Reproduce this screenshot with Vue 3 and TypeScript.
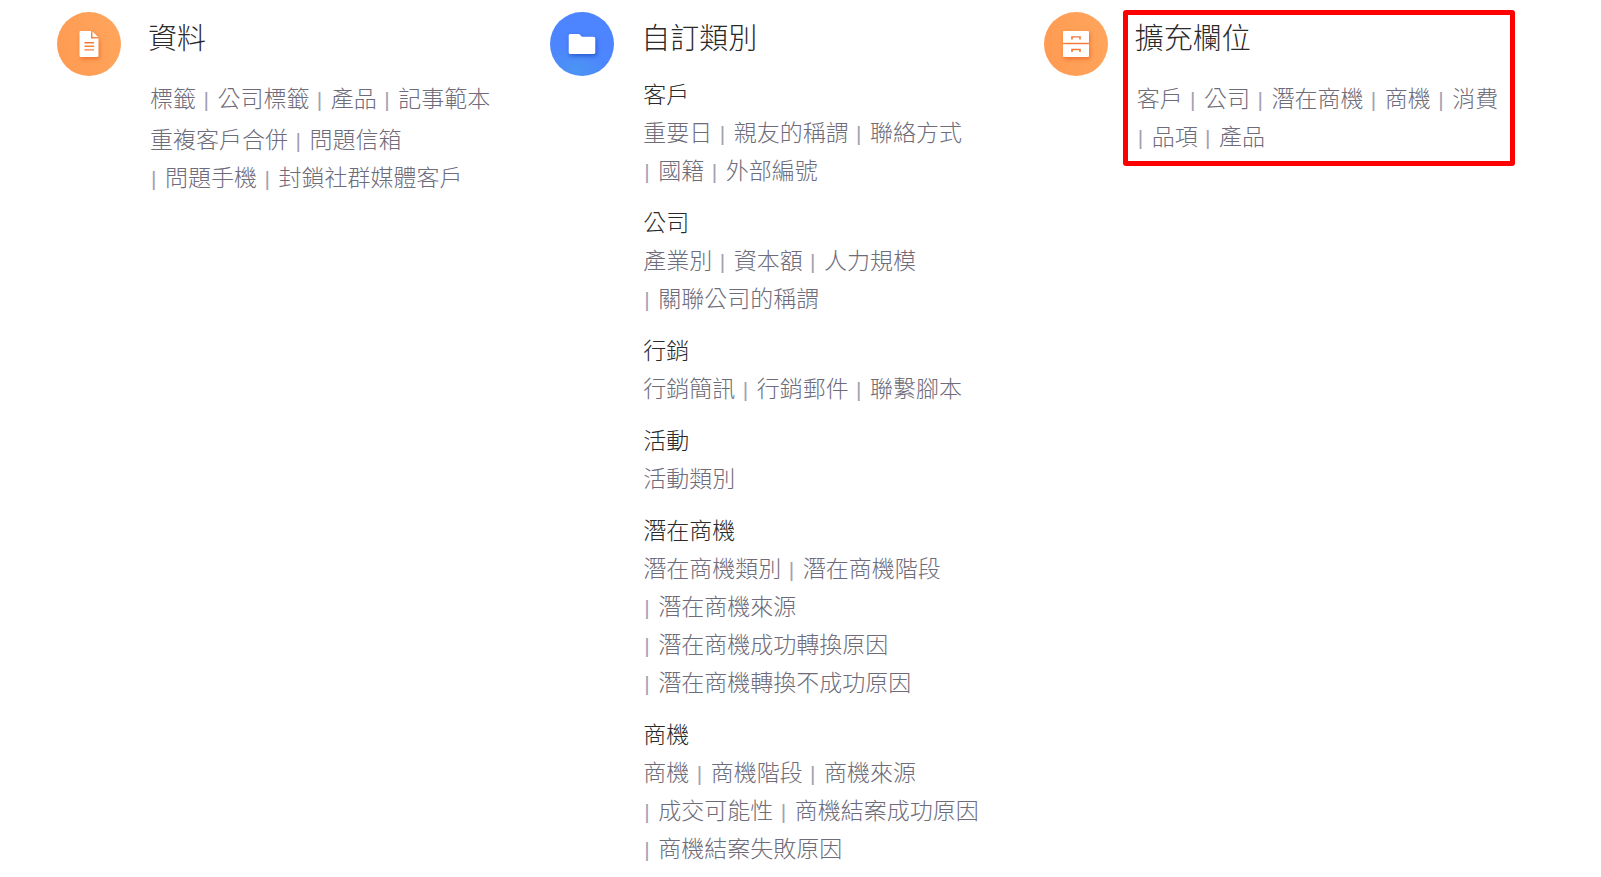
<script setup lang="ts">
interface Group {
  heading?: string
  items: string[]
}

interface Category {
  id: string
  title: string
  tone: 'orange' | 'blue'
  highlighted?: boolean
  grouped?: boolean
  groups: Group[]
}

const categories: Category[] = [
  {
    id: 'data',
    title: '資料',
    tone: 'orange',
    groups: [
      { items: ['標籤', '公司標籤', '產品', '記事範本'] },
      { items: ['重複客戶合併', '問題信箱', '問題手機', '封鎖社群媒體客戶'] },
    ],
  },
  {
    id: 'custom',
    title: '自訂類別',
    tone: 'blue',
    grouped: true,
    groups: [
      { heading: '客戶', items: ['重要日', '親友的稱謂', '聯絡方式', '國籍', '外部編號'] },
      { heading: '公司', items: ['產業別', '資本額', '人力規模', '關聯公司的稱謂'] },
      { heading: '行銷', items: ['行銷簡訊', '行銷郵件', '聯繫腳本'] },
      { heading: '活動', items: ['活動類別'] },
      {
        heading: '潛在商機',
        items: ['潛在商機類別', '潛在商機階段', '潛在商機來源', '潛在商機成功轉換原因', '潛在商機轉換不成功原因'],
      },
      {
        heading: '商機',
        items: ['商機', '商機階段', '商機來源', '成交可能性', '商機結案成功原因', '商機結案失敗原因'],
      },
    ],
  },
  {
    id: 'fields',
    title: '擴充欄位',
    tone: 'orange',
    highlighted: true,
    groups: [{ items: ['客戶', '公司', '潛在商機', '商機', '消費', '品項', '產品'] }],
  },
]
</script>

<template>
  <main class="settings">
    <section v-for="cat in categories" :key="cat.id" class="category">
      <div class="badge" :class="cat.tone">
        <svg v-if="cat.id === 'data'" viewBox="0 0 64 64" aria-hidden="true">
          <path
            fill="#fff"
            fill-rule="evenodd"
            d="M23.5 19H34v7.5h7.5V44a1 1 0 0 1-1 1h-17a1 1 0 0 1-1-1V20a1 1 0 0 1 1-1zM27.5 30v1.4h9.5V30zM27.5 33.6V35h9.5v-1.4zM27.5 37.2v1.4h9.5v-1.4z"
          />
          <path fill="#fff" d="M35.5 19.5l5.6 5.6h-5.6z" />
        </svg>
        <svg v-else-if="cat.id === 'custom'" viewBox="0 0 64 64" aria-hidden="true">
          <path
            fill="#fff"
            d="M20.4 22h8.2c.5 0 .9.2 1.2.5l2.2 2.3h11.5c1 0 1.8.8 1.8 1.8v13.6c0 1-.8 1.8-1.8 1.8h-23c-1 0-1.8-.8-1.8-1.8V23.6c0-.9.8-1.6 1.7-1.6z"
          />
        </svg>
        <svg v-else viewBox="0 0 64 64" aria-hidden="true">
          <path
            fill="#fff"
            fill-rule="evenodd"
            d="M20 19h24a1 1 0 0 1 1 1v10.8H19V20a1 1 0 0 1 1-1zM27.2 24.2v3.2h1.6v-1.8h6.4v1.8h1.6v-3.2z"
          />
          <path
            fill="#fff"
            fill-rule="evenodd"
            d="M19 32.2h26V44a1 1 0 0 1-1 1H20a1 1 0 0 1-1-1zM27.2 36.8V40h1.6v-1.8h6.4V40h1.6v-3.2z"
          />
        </svg>
      </div>

      <div class="body" :class="{ highlighted: cat.highlighted, grouped: cat.grouped }">
        <h2 class="title">{{ cat.title }}</h2>
        <div v-for="(group, g) in cat.groups" :key="g" class="group">
          <h3 v-if="group.heading" class="heading">{{ group.heading }}</h3>
          <p class="links">
            <template v-for="(item, i) in group.items" :key="item"
              >{{ i > 0 ? ' ' : '' }}<span class="entry"
                ><span v-if="i > 0" class="bar">|</span><a href="#">{{ item }}</a></span
              ></template
            >
          </p>
        </div>
      </div>
    </section>
  </main>
</template>

<style>
body {
  margin: 0;
  background: #fff;
}
</style>

<style scoped>
.settings {
  display: grid;
  grid-template-columns: repeat(3, 1fr);
  gap: 38px;
  padding: 12px 102px 8px 57px;
  font-family: 'Liberation Sans', 'Noto Sans CJK TC', sans-serif;
  font-weight: 300;
  color: #2a2a2a;
}

.category {
  display: flex;
  align-items: flex-start;
  gap: 27px;
}

.badge {
  flex: none;
  width: 64px;
  height: 64px;
  border-radius: 50%;
}

.badge svg {
  display: block;
  width: 64px;
  height: 64px;
}

.orange {
  background: linear-gradient(75deg, #ff9a52, #ffa65c);
}

.orange svg {
  filter: drop-shadow(1px 2px 2px rgba(226, 80, 20, 0.6));
}

.blue {
  background:
    radial-gradient(circle at 42% 92%, rgba(74, 166, 236, 0.4), rgba(74, 160, 236, 0) 40%),
    linear-gradient(15deg, #4c8af8, #4d84ff 60%);
}

.blue svg {
  filter: drop-shadow(1px 2px 2px rgba(20, 60, 190, 0.65));
}

.body {
  position: relative;
  flex: 1;
  min-width: 0;
}

.title {
  margin: 0 0 14px;
  font-size: 29px;
  font-weight: inherit;
  line-height: 54px;
}

.grouped .title {
  margin-bottom: 10px;
}

.group {
  padding-left: 2px;
}

.group + .group {
  margin-top: 3px;
}

.grouped .group + .group {
  margin-top: 14px;
}

.heading,
.links {
  margin: 0;
  font-size: 23px;
  font-weight: inherit;
  line-height: 38px;
}

.links {
  color: #6e6c7a;
}

.entry {
  white-space: nowrap;
}

.bar {
  display: inline-block;
  box-sizing: border-box;
  width: 15px;
  padding-left: 1px;
  font-size: 21px;
  line-height: 1;
  color: #a3a1b0;
}

.links a {
  color: inherit;
  text-decoration: none;
}

.highlighted::after {
  content: '';
  position: absolute;
  inset: -2px -16px -10px -12px;
  border: 5px solid #f00;
  border-radius: 3px;
  pointer-events: none;
}
</style>
